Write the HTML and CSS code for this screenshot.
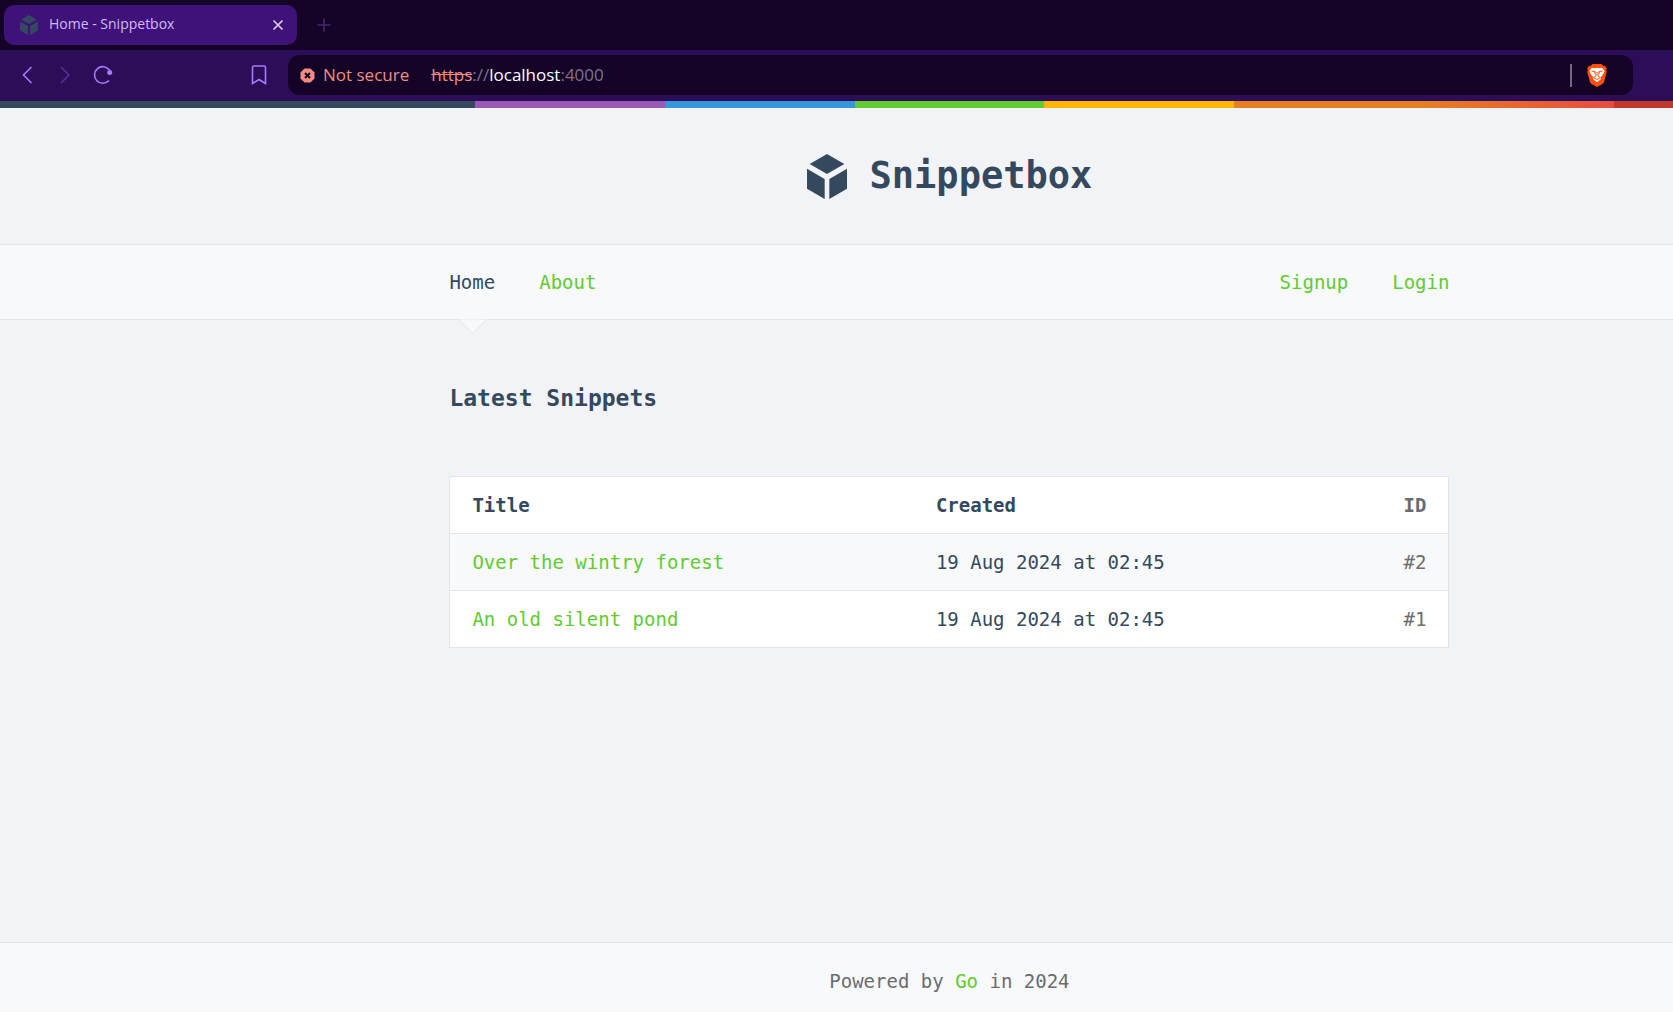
FILE: index.html
```html
<!DOCTYPE html>
<html lang="en">
<head>
<meta charset="utf-8">
<title>Home - Snippetbox</title>
<link rel="stylesheet" href="styles.css">
</head>
<body>
<svg class="defs" width="0" height="0" aria-hidden="true">
  <symbol id="cube" viewBox="0 0 120 135">
    <path d="M60 0 112 30 60 60 8 30Z"/>
    <path d="M0 44 53 75V135L0 104Z"/>
    <path d="M120 44 67 75V135L120 104Z"/>
  </symbol>
</svg>

<div class="browser">
  <div class="tabs">
    <div class="tab">
      <svg class="favicon" aria-hidden="true"><use href="#cube"/></svg>
      <span class="tab-title">Home - Snippetbox</span>
      <button class="icon-btn close" aria-label="Close tab">
        <svg width="12" height="12" viewBox="0 0 12 12"><path d="M1.500 1.500 10.500 10.500M10.500 1.500 1.500 10.500"/></svg>
      </button>
    </div>
    <button class="icon-btn new-tab" aria-label="New tab">
      <svg width="14" height="14" viewBox="0 0 14 14"><path d="M7 0.500V13.500M0.500 7H13.500"/></svg>
    </button>
  </div>
  <div class="toolbar">
    <div class="history">
      <button class="icon-btn" aria-label="Back">
        <svg width="20" height="20" viewBox="0 0 20 20"><path d="M14.500 2 6.500 10 14.500 18"/></svg>
      </button>
      <button class="icon-btn dim" aria-label="Forward">
        <svg width="20" height="20" viewBox="0 0 20 20"><path d="M6 2 14 10 6 18"/></svg>
      </button>
      <button class="icon-btn" aria-label="Reload">
        <svg width="20" height="20" viewBox="0 0 20 20"><path d="M16 15.500A8.300 8.300 0 1 1 16.500 5"/><circle class="solid" cx="16.700" cy="7.500" r="2.500"/></svg>
      </button>
    </div>
    <button class="icon-btn bookmark" aria-label="Bookmark">
      <svg width="16" height="20" viewBox="0 0 16 20"><path d="M3 1H13Q14.500 1 14.500 2.500V18.500L8 14.500 1.500 18.500V2.500Q1.500 1 3 1Z"/></svg>
    </button>
    <div class="address">
      <svg class="warning" width="15" height="15" viewBox="0 0 15 15" aria-hidden="true"><path class="badge" d="M4.500 0.500H10.500L14.500 4.500V10.500L10.500 14.500H4.500L0.500 10.500V4.500Z"/><path class="cross" d="M5 5 10 10M10 5 5 10"/></svg>
      <span class="insecure">Not secure</span>
      <span class="url"><s>https</s>://<b>localhost</b>:4000</span>
      <button class="icon-btn shield" aria-label="Shields">
        <svg width="20" height="23" viewBox="0 0 20 23">
          <path class="shield-body" d="M5.500 0H14.500L16.300 2 18 1.800 19.800 4.200 19.200 6 19.700 8 17 18.200 15.500 20 10 23 4.500 20 3 18.200 0.300 8 0.800 6 0.200 4.200 2 1.800 3.700 2Z"/>
          <path class="shield-face" d="M5 3.800 8 4.300 10 3.800 12 4.300 15 3.800 17.500 6.800 16.500 9.500 14.300 12.500 13.500 15.500 10 18.200 6.500 15.500 5.700 12.500 3.500 9.500 2.500 6.800Z"/>
          <path class="shield-lines" d="M4.500 7 8 7.600 7.500 9.500M15.500 7 12 7.600 12.500 9.500M9 8V12L6.500 13.500 10 15.500 13.500 13.500 11 12V8"/>
        </svg>
      </button>
    </div>
  </div>
</div>

<div class="viewport">
  <div class="page">
    <header class="masthead">
      <h1><a class="brand" href="#"><svg class="logo" aria-hidden="true"><use href="#cube"/></svg>Snippetbox</a></h1>
    </header>
    <nav class="nav">
      <div class="container nav-row">
        <div class="links">
          <a class="live" href="#">Home</a>
          <a href="#">About</a>
        </div>
        <div class="links">
          <a href="#">Signup</a>
          <a href="#">Login</a>
        </div>
      </div>
    </nav>
    <main class="container main">
      <h2>Latest Snippets</h2>
      <table>
        <thead>
          <tr><th class="col-title">Title</th><th>Created</th><th class="col-id">ID</th></tr>
        </thead>
        <tbody>
          <tr><td><a href="#">Over the wintry forest</a></td><td>19 Aug 2024 at 02:45</td><td class="col-id">#2</td></tr>
          <tr><td><a href="#">An old silent pond</a></td><td>19 Aug 2024 at 02:45</td><td class="col-id">#1</td></tr>
        </tbody>
      </table>
    </main>
    <footer>Powered by <a href="#">Go</a> in 2024</footer>
  </div>
</div>
</body>
</html>
```
FILE: styles.css
```css
* {
  box-sizing: border-box;
}

body {
  margin: 0;
  min-height: 100vh;
  display: flex;
  flex-direction: column;
  background: #f1f3f6;
  color: #34495e;
  font: 19px/30px "DejaVu Sans Mono", monospace;
}

a {
  color: #62cb31;
  text-decoration: none;
}

.defs {
  position: absolute;
}

/* Browser chrome */

.browser {
  font-family: "Open Sans", "Noto Sans", sans-serif;
  background: #2b0e57;
}

.tabs {
  display: flex;
  align-items: center;
  height: 50px;
  padding-left: 4px;
  gap: 20px;
  background: #140326;
}

.tab {
  display: flex;
  align-items: center;
  width: 293px;
  height: 40px;
  padding: 0 13px 0 16px;
  gap: 11px;
  border-radius: 10px;
  background: #3f127a;
  color: #cfbcf7;
  font-size: 14px;
}

.favicon {
  width: 18px;
  height: 20px;
  fill: #34495e;
}

.tab-title {
  flex: 1;
  padding-bottom: 2px;
}

.icon-btn {
  display: flex;
  padding: 0;
  border: 0;
  background: none;
  color: #a47cff;
}

.icon-btn path {
  fill: none;
  stroke: currentColor;
  stroke-width: 1.6;
}

.icon-btn .solid {
  fill: currentColor;
}

.close {
  color: #ddd0fb;
}

.new-tab {
  color: #44286f;
}

.dim {
  color: #573195;
}

.toolbar {
  display: flex;
  align-items: center;
  height: 51px;
  padding: 0 40px 1px 17px;
}

.history {
  display: flex;
  gap: 18px;
  width: 234px;
}

.bookmark {
  margin-right: 21px;
}

.address {
  flex: 1;
  display: flex;
  align-items: center;
  height: 40px;
  padding: 0 26px 0 12px;
  border-radius: 12px;
  background: #140326;
  color: #7e738f;
  font-size: 17px;
}

.badge {
  fill: #f28b82;
}

.cross {
  stroke: #140326;
  stroke-width: 2;
}

.insecure {
  margin: 0 22px 0 8px;
  color: #f28b82;
}

.url {
  flex: 1;
}

.url s {
  color: #f28b82;
}

.url b {
  color: #fff;
  font-weight: 400;
}

.shield {
  padding-left: 15px;
  border-left: 2px solid #73687f;
}

.shield .shield-body {
  fill: #fb4f0c;
  stroke: none;
}

.shield .shield-face {
  fill: #fff;
  stroke: none;
}

.shield .shield-lines {
  stroke: #fb4f0c;
  stroke-width: 1;
}

/* The site runs on past the right edge of the window */

.viewport {
  flex: 1;
  display: flex;
  overflow: hidden;
}

.page {
  flex: none;
  display: flex;
  flex-direction: column;
  width: 113.5%;
}

.page::before {
  content: "";
  height: 7px;
  background: linear-gradient(to right, #34495e 25%, #9b59b6 25% 35%, #3498db 35% 45%, #62cb31 45% 55%, #ffb606 55% 65%, #e67e22 65% 75%, #e74c3c 85%, #c0392b 85%);
}

.container {
  width: 100%;
  max-width: 1000px;
  margin: 0 auto;
}

.masthead {
  padding: 38px 0;
}

h1 {
  margin: 0;
  font-size: 37px;
  line-height: 60px;
}

.brand {
  display: flex;
  align-items: center;
  justify-content: center;
  gap: 23px;
  color: #34495e;
}

.logo {
  width: 40px;
  height: 45px;
  fill: #34495e;
}

.nav {
  border: solid #e4e5e7;
  border-width: 1px 0;
  background: #f7f9fa;
}

.nav-row {
  display: flex;
  justify-content: space-between;
}

.links {
  display: flex;
  gap: 44px;
}

.links a {
  padding: 22px 0;
}

.live {
  position: relative;
  color: #34495e;
}

.live::after {
  content: "";
  position: absolute;
  bottom: -11px;
  left: calc(50% - 10px);
  width: 20px;
  height: 20px;
  border: solid #e4e5e7;
  border-width: 0 1px 1px 0;
  background: #f7f9fa;
  transform: rotate(45deg);
  clip-path: polygon(100% 0, 100% 100%, 0 100%);
}

.main {
  flex: 1;
  padding: 63px 0 54px;
}

h2 {
  margin: 0 0 63px;
  font-size: 23px;
  line-height: 30px;
}

table {
  width: 100%;
  border-collapse: collapse;
  border: 1px solid #e4e5e7;
  background: #fff;
}

tr {
  border-bottom: 1px solid #e4e5e7;
}

tbody tr:nth-child(odd) {
  background: #f7f9fa;
}

th,
td {
  padding: 13px 22px;
  text-align: left;
}

.col-title {
  width: 464px;
}

.col-id {
  text-align: right;
  color: #6a6c6f;
}

footer {
  padding: 23px 0 16px;
  border-top: 1px solid #e4e5e7;
  background: #f7f9fa;
  color: #6a6c6f;
  text-align: center;
}
```
